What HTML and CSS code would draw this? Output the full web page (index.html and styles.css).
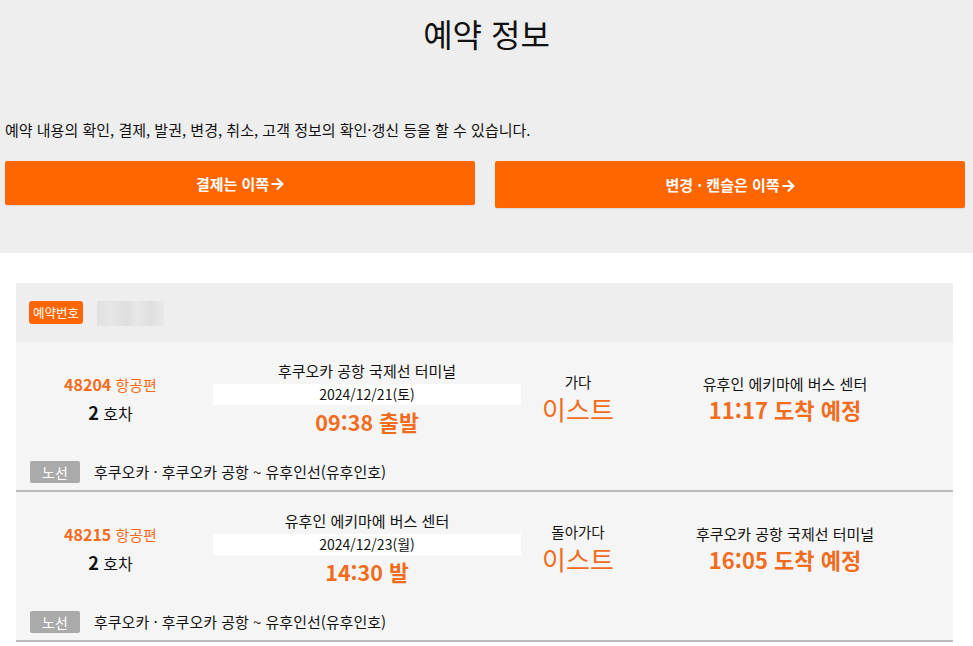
FILE: index.html
```html
<!DOCTYPE html>
<html lang="ko">
<head>
<meta charset="utf-8">
<title>예약 정보</title>
<link rel="stylesheet" href="styles.css">
</head>
<body>
<section class="top">
  <h1 class="title">예약 정보</h1>
  <p class="desc">예약 내용의 확인, 결제, 발권, 변경, 취소, 고객 정보의 확인·갱신 등을 할 수 있습니다.</p>
  <div class="btns">
    <a class="btn btn-pay" href="#">결제는 이쪽<svg class="arrow" viewBox="0 0 448 512"><path d="M190.5 66.9l22.2-22.2c9.4-9.4 24.6-9.4 33.9 0L441 239c9.4 9.4 9.4 24.6 0 33.9L246.6 467.3c-9.4 9.4-24.6 9.4-33.9 0l-22.2-22.2c-9.5-9.5-9.3-25 .4-34.3L311.4 296H24c-13.3 0-24-10.7-24-24v-32c0-13.3 10.7-24 24-24h287.4L190.9 101.2c-9.8-9.3-10-24.8-.4-34.3z"/></svg></a>
    <a class="btn btn-change" href="#">변경 · 캔슬은 이쪽<svg class="arrow" viewBox="0 0 448 512"><path d="M190.5 66.9l22.2-22.2c9.4-9.4 24.6-9.4 33.9 0L441 239c9.4 9.4 9.4 24.6 0 33.9L246.6 467.3c-9.4 9.4-24.6 9.4-33.9 0l-22.2-22.2c-9.5-9.5-9.3-25 .4-34.3L311.4 296H24c-13.3 0-24-10.7-24-24v-32c0-13.3 10.7-24 24-24h287.4L190.9 101.2c-9.8-9.3-10-24.8-.4-34.3z"/></svg></a>
  </div>
</section>

<div class="page">
<section class="card">
  <div class="card-head">
    <span class="badge-no">예약번호</span>
    <span class="blurred"></span>
  </div>

  <div class="trip">
    <div class="trip-grid">
      <div class="col col-bus">
        <div class="flight"><b>48204</b> 항공편</div>
        <div class="car"><b>2</b> 호차</div>
      </div>
      <div class="col col-dep">
        <div class="station">후쿠오카 공항 국제선 터미널</div>
        <div class="date">2024/12/21(토)</div>
        <div class="time">09:38 출발</div>
      </div>
      <div class="col col-dir">
        <div class="dir">가다</div>
        <div class="east">이스트</div>
      </div>
      <div class="col col-arr">
        <div class="station">유후인 에키마에 버스 센터</div>
        <div class="time">11:17 도착 예정</div>
      </div>
    </div>
    <div class="route"><span class="badge-route">노선</span><span class="route-name">후쿠오카 · 후쿠오카 공항 ~ 유후인선(유후인호)</span></div>
  </div>

  <div class="trip">
    <div class="trip-grid">
      <div class="col col-bus">
        <div class="flight"><b>48215</b> 항공편</div>
        <div class="car"><b>2</b> 호차</div>
      </div>
      <div class="col col-dep">
        <div class="station">유후인 에키마에 버스 센터</div>
        <div class="date">2024/12/23(월)</div>
        <div class="time">14:30 발</div>
      </div>
      <div class="col col-dir">
        <div class="dir">돌아가다</div>
        <div class="east">이스트</div>
      </div>
      <div class="col col-arr">
        <div class="station">후쿠오카 공항 국제선 터미널</div>
        <div class="time">16:05 도착 예정</div>
      </div>
    </div>
    <div class="route"><span class="badge-route">노선</span><span class="route-name">후쿠오카 · 후쿠오카 공항 ~ 유후인선(유후인호)</span></div>
  </div>
</section>
</div>
</body>
</html>
```

FILE: styles.css
```css
* { box-sizing: border-box; }
html, body {
  margin: 0;
  padding: 0;
  background: #ffffff;
  color: #111;
  font-family: "Noto Sans CJK KR", "Noto Sans", sans-serif;
}
.top {
  background: #eeeeee;
  height: 253px;
  padding: 11px 0 0;
}
.title {
  margin: 0;
  text-align: center;
  font-size: 32px;
  font-weight: 400;
  line-height: 44px;
  color: #111;
}
.desc {
  margin: 65px 0 0 5px;
  font-size: 15px;
  line-height: 20px;
  color: #111;
}
.btns {
  display: flex;
  gap: 20px;
  padding: 0 8px 0 5px;
  margin-top: 21px;
  align-items: flex-start;
}
.btn {
  flex: 1;
  display: flex;
  align-items: center;
  justify-content: center;
  background: #ff6600;
  color: #fff;
  text-decoration: none;
  font-size: 15px;
  font-weight: 700;
  border-radius: 2px;
  height: 44px;
  box-shadow: 0 1px 1px rgba(0,0,0,0.08);
}
.btn-change { height: 47px; }
.arrow {
  width: 13px;
  height: 14px;
  fill: #fff;
  margin-left: 2px;
  margin-top: 2px;
}
.page {
  display: flex;
  padding: 30px 20px 0 16px;
}
.card {
  flex: 0 0 937px;
  width: 937px;
}
.card-head {
  background: #eeeeee;
  height: 59px;
  display: flex;
  align-items: center;
  padding-left: 13px;
  gap: 14px;
}
.badge-no {
  background: #ff6600;
  color: #fff;
  font-size: 12.5px;
  line-height: 23px;
  height: 23px;
  padding: 0 4px;
  border-radius: 3px;
}
.blurred {
  width: 67px;
  height: 25px;
  margin-top: 2px;
  background: linear-gradient(90deg, #e0e0e0 0, #e6e6e6 20%, #dedede 45%, #e8e8e8 60%, #dfdfdf 80%, #e9e9e9 100%);
  filter: blur(0.6px);
}
.trip {
  background: #f5f5f5;
  padding: 19px 0 7px;
  border-bottom: 2px solid #bdbdbd;
}
.trip-grid {
  display: grid;
  grid-template-columns: 197px 308px 114px 300px;
  align-items: center;
}
.col {
  display: flex;
  flex-direction: column;
  align-items: center;
  text-align: center;
}
.col-bus { padding-right: 8px; }
.flight {
  color: #f26c1d;
  font-size: 15px;
  line-height: 20px;
}
.flight b { font-size: 16px; }
.car {
  font-size: 16px;
  line-height: 20px;
  margin-top: 7px;
  color: #111;
}
.car b { font-size: 18px; }
.station {
  font-size: 15px;
  line-height: 20px;
  color: #111;
}
.col-dep { align-items: stretch; }
.date {
  background: #ffffff;
  font-size: 14px;
  line-height: 20px;
  height: 21px;
  margin-top: 3px;
}
.time {
  color: #f26c1d;
  font-size: 21.5px;
  font-weight: 700;
  line-height: 26px;
  margin-top: 4px;
}
.col-arr .time { margin-top: 2px; font-size: 22px; }
.dir {
  font-size: 14.5px;
  line-height: 20px;
}
.east {
  color: #f26c1d;
  font-size: 26px;
  line-height: 32px;
  margin-top: 1px;
}
.route {
  display: flex;
  align-items: center;
  margin: 26px 0 0 14px;
  gap: 14px;
}
.badge-route {
  background: #aaaaaa;
  color: #fff;
  font-size: 14px;
  line-height: 22px;
  height: 22px;
  width: 50px;
  text-align: center;
  border-radius: 2px;
}
.route-name {
  font-size: 15px;
  line-height: 20px;
  color: #111;
}
```
